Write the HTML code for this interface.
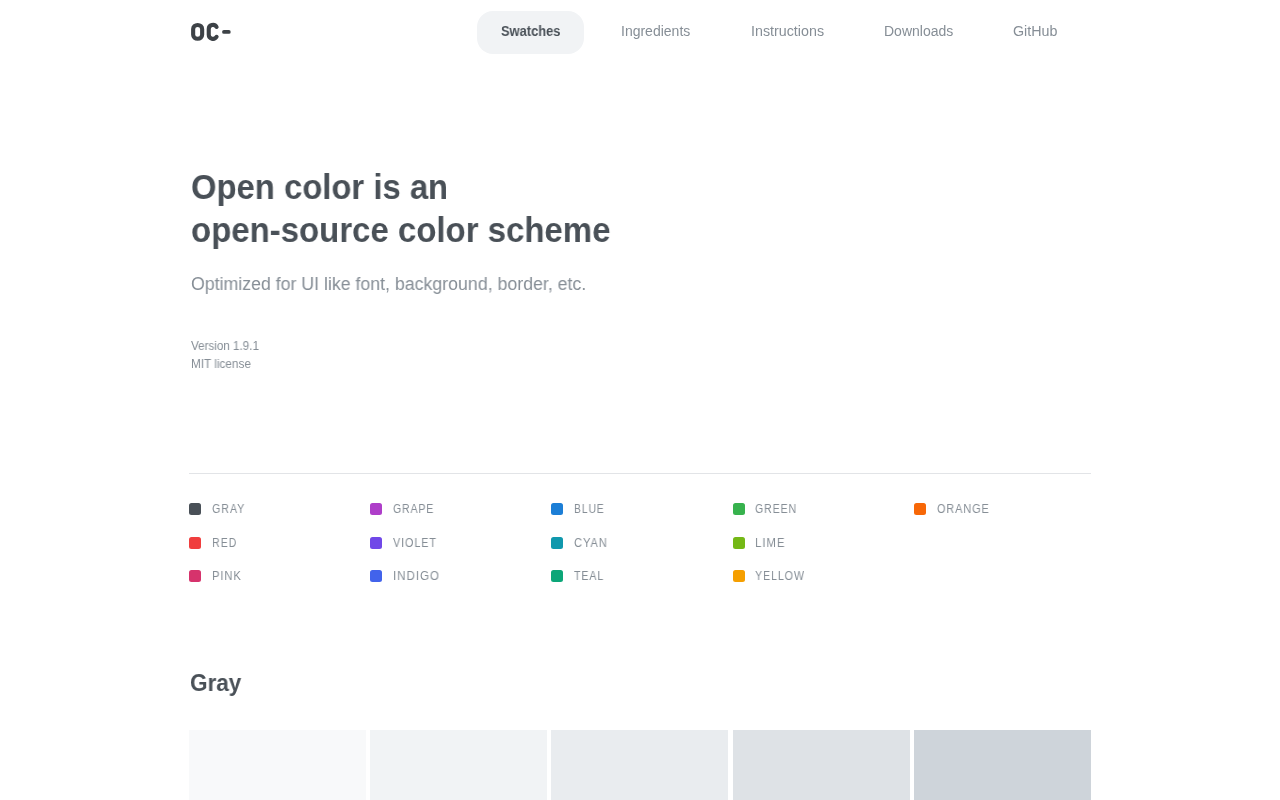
<!DOCTYPE html>
<html>
<head>
<meta charset="utf-8">
<style>
*{margin:0;padding:0;box-sizing:border-box;}
html,body{width:1280px;height:800px;overflow:hidden;background:#fff;}
body{font-family:"Liberation Sans",sans-serif;color:#495057;position:relative;}
.t{position:absolute;white-space:nowrap;transform-origin:0 0;will-change:transform;}
#logo{position:absolute;left:189px;top:20px;}
.pill{position:absolute;border-radius:16px;background:#f1f3f5;}
.nav{font-size:14px;line-height:14px;color:#868e96;}
.nav.on{color:#495057;font-weight:bold;}
.h1{font-size:35px;line-height:35px;font-weight:bold;color:#495057;}
.sub{font-size:18px;line-height:18px;color:#868e96;}
.ver{font-size:12px;line-height:12px;color:#868e96;}
.hr{position:absolute;left:189px;top:473px;width:902px;height:1px;background:#e2e4e7;}
.sq{position:absolute;width:12px;height:12px;border-radius:2.5px;}
.lab{font-size:12px;line-height:12px;color:#868e96;}
.gray{font-size:24px;line-height:24px;font-weight:bold;color:#495057;}
.sw{position:absolute;top:730px;height:80px;width:177px;}
</style>
</head>
<body>
<svg id="logo" width="60" height="30" viewBox="189 20 60 30">
<path d="M193.15 29.0 A4.5 4.05 0 0 1 202.15 29.0 V34.75 A4.5 4.05 0 0 1 193.15 34.75 Z" fill="none" stroke="#3d4247" stroke-width="4.1"/>
<path d="M216.59 26.97 A4.2 4.05 0 0 0 208.75 29.0 V34.75 A4.2 4.05 0 0 0 216.59 36.78" fill="none" stroke="#3d4247" stroke-width="4.1" stroke-linecap="round"/>
<rect x="222.1" y="30.1" width="8.6" height="3.7" rx="1.85" fill="#3d4247"/>
</svg>
<div class="pill" style="left:477px;top:10.6px;width:107px;height:43.6px"></div>
<div id="Swatches" class="t nav on" style="left:501px;top:24px;transform:scaleX(0.9200);">Swatches</div>
<div id="Ingredients" class="t nav" style="left:621px;top:24px;transform:scaleX(1.0000);">Ingredients</div>
<div id="Instructions" class="t nav" style="left:751px;top:24px;transform:scaleX(1.0200);">Instructions</div>
<div id="Downloads" class="t nav" style="left:884.4px;top:24px;transform:scaleX(0.9950);">Downloads</div>
<div id="GitHub" class="t nav" style="left:1013.4px;top:24px;transform:scaleX(1.0200);">GitHub</div>
<div id="h1a" class="t h1" style="left:191px;top:169px;transform:scaleX(0.9376);">Open color is an</div>
<div id="h1b" class="t h1" style="left:191px;top:212.3px;transform:scaleX(0.9418);">open-source color scheme</div>
<div id="sub" class="t sub" style="left:191px;top:274.5px;transform:scaleX(0.9850);">Optimized for UI like font, background, border, etc.</div>
<div id="v1" class="t ver" style="left:191px;top:340px;transform:scaleX(0.9700);">Version 1.9.1</div>
<div id="v2" class="t ver" style="left:191px;top:358px;transform:scaleX(0.9800);">MIT license</div>
<div id="Gray" class="t gray" style="left:189.5px;top:670.5px;transform:scaleX(0.9380);">Gray</div>
<div class="hr"></div>
<div class="sq" style="left:189px;top:503px;background:#495057"></div>
<div id="GRAY" class="t lab" style="left:211.7px;top:503.4px;transform:scaleX(0.8970);letter-spacing:1px;">GRAY</div>
<div class="sq" style="left:189px;top:537px;background:#f03e3e"></div>
<div id="RED" class="t lab" style="left:211.7px;top:537.4px;transform:scaleX(0.8890);letter-spacing:1px;">RED</div>
<div class="sq" style="left:189px;top:570px;background:#d6336c"></div>
<div id="PINK" class="t lab" style="left:211.7px;top:570.4px;transform:scaleX(0.9290);letter-spacing:1px;">PINK</div>
<div class="sq" style="left:370px;top:503px;background:#ae3ec9"></div>
<div id="GRAPE" class="t lab" style="left:392.9px;top:503.4px;transform:scaleX(0.8760);letter-spacing:1px;">GRAPE</div>
<div class="sq" style="left:370px;top:537px;background:#7048e8"></div>
<div id="VIOLET" class="t lab" style="left:392.9px;top:537.4px;transform:scaleX(0.9020);letter-spacing:1px;">VIOLET</div>
<div class="sq" style="left:370px;top:570px;background:#4263eb"></div>
<div id="INDIGO" class="t lab" style="left:392.9px;top:570.4px;transform:scaleX(0.9650);letter-spacing:1px;">INDIGO</div>
<div class="sq" style="left:551px;top:503px;background:#1c7ed6"></div>
<div id="BLUE" class="t lab" style="left:574.1px;top:503.4px;transform:scaleX(0.8660);letter-spacing:1px;">BLUE</div>
<div class="sq" style="left:551px;top:537px;background:#1098ad"></div>
<div id="CYAN" class="t lab" style="left:574.1px;top:537.4px;transform:scaleX(0.9260);letter-spacing:1px;">CYAN</div>
<div class="sq" style="left:551px;top:570px;background:#0ca678"></div>
<div id="TEAL" class="t lab" style="left:574.1px;top:570.4px;transform:scaleX(0.8880);letter-spacing:1px;">TEAL</div>
<div class="sq" style="left:733px;top:503px;background:#37b24d"></div>
<div id="GREEN" class="t lab" style="left:755.3px;top:503.4px;transform:scaleX(0.8810);letter-spacing:1px;">GREEN</div>
<div class="sq" style="left:733px;top:537px;background:#74b816"></div>
<div id="LIME" class="t lab" style="left:755.3px;top:537.4px;transform:scaleX(0.9500);letter-spacing:1px;">LIME</div>
<div class="sq" style="left:733px;top:570px;background:#f59f00"></div>
<div id="YELLOW" class="t lab" style="left:755.3px;top:570.4px;transform:scaleX(0.8910);letter-spacing:1px;">YELLOW</div>
<div class="sq" style="left:914px;top:503px;background:#f76707"></div>
<div id="ORANGE" class="t lab" style="left:936.5px;top:503.4px;transform:scaleX(0.9070);letter-spacing:1px;">ORANGE</div>
<div class="sw" style="left:189px;background:#f8f9fa"></div>
<div class="sw" style="left:370px;background:#f1f3f5"></div>
<div class="sw" style="left:551px;background:#e9ecef"></div>
<div class="sw" style="left:733px;background:#dee2e6"></div>
<div class="sw" style="left:914px;background:#ced4da"></div>
</body>
</html>
